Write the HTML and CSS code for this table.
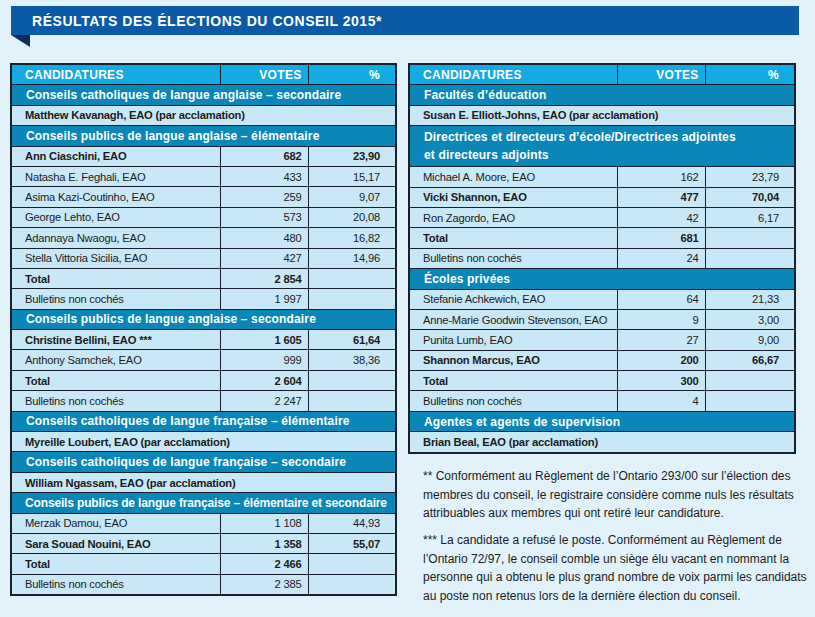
FILE: index.html
```html
<!DOCTYPE html>
<html lang="fr">
<head>
<meta charset="utf-8">
<title>Résultats des élections du conseil 2015</title>
<link rel="stylesheet" href="styles.css">
</head>
<body>
<div class="page">
  <header class="banner">
    <h1 class="banner-title">RÉSULTATS DES ÉLECTIONS DU CONSEIL 2015*</h1>
  </header>
  <div class="fold"></div>

  <div class="columns">
    <table class="results results-left">
      <colgroup><col class="c-name"><col class="c-votes"><col class="c-pct"></colgroup>
      <thead>
        <tr class="head"><th class="name">CANDIDATURES</th><th class="num">VOTES</th><th class="pct">%</th></tr>
      </thead>
      <tbody>
        <tr class="sec"><td colspan="3">Conseils catholiques de langue anglaise – secondaire</td></tr>
        <tr class="b"><td colspan="3" class="name">Matthew Kavanagh, EAO (par acclamation)</td></tr>
        <tr class="sec"><td colspan="3">Conseils publics de langue anglaise – élémentaire</td></tr>
        <tr class="b"><td class="name">Ann Ciaschini, EAO</td><td class="num">682</td><td class="pct">23,90</td></tr>
        <tr><td class="name">Natasha E. Feghali, EAO</td><td class="num">433</td><td class="pct">15,17</td></tr>
        <tr><td class="name">Asima Kazi-Coutinho, EAO</td><td class="num">259</td><td class="pct">9,07</td></tr>
        <tr><td class="name">George Lehto, EAO</td><td class="num">573</td><td class="pct">20,08</td></tr>
        <tr><td class="name">Adannaya Nwaogu, EAO</td><td class="num">480</td><td class="pct">16,82</td></tr>
        <tr><td class="name">Stella Vittoria Sicilia, EAO</td><td class="num">427</td><td class="pct">14,96</td></tr>
        <tr class="b"><td class="name">Total</td><td class="num">2 854</td><td class="pct"></td></tr>
        <tr><td class="name">Bulletins non cochés</td><td class="num">1 997</td><td class="pct"></td></tr>
        <tr class="sec"><td colspan="3">Conseils publics de langue anglaise – secondaire</td></tr>
        <tr class="b"><td class="name">Christine Bellini, EAO ***</td><td class="num">1 605</td><td class="pct">61,64</td></tr>
        <tr><td class="name">Anthony Samchek, EAO</td><td class="num">999</td><td class="pct">38,36</td></tr>
        <tr class="b"><td class="name">Total</td><td class="num">2 604</td><td class="pct"></td></tr>
        <tr><td class="name">Bulletins non cochés</td><td class="num">2 247</td><td class="pct"></td></tr>
        <tr class="sec"><td colspan="3">Conseils catholiques de langue française – élémentaire</td></tr>
        <tr class="b"><td colspan="3" class="name">Myreille Loubert, EAO (par acclamation)</td></tr>
        <tr class="sec"><td colspan="3">Conseils catholiques de langue française – secondaire</td></tr>
        <tr class="b"><td colspan="3" class="name">William Ngassam, EAO (par acclamation)</td></tr>
        <tr class="sec tight"><td colspan="3">Conseils publics de langue française – élémentaire et secondaire</td></tr>
        <tr><td class="name">Merzak Damou, EAO</td><td class="num">1 108</td><td class="pct">44,93</td></tr>
        <tr class="b"><td class="name">Sara Souad Nouini, EAO</td><td class="num">1 358</td><td class="pct">55,07</td></tr>
        <tr class="b"><td class="name">Total</td><td class="num">2 466</td><td class="pct"></td></tr>
        <tr><td class="name">Bulletins non cochés</td><td class="num">2 385</td><td class="pct"></td></tr>
      </tbody>
    </table>

    <div class="right">
      <table class="results results-right">
        <colgroup><col class="c-name"><col class="c-votes"><col class="c-pct"></colgroup>
        <thead>
          <tr class="head"><th class="name">CANDIDATURES</th><th class="num">VOTES</th><th class="pct">%</th></tr>
        </thead>
        <tbody>
          <tr class="sec"><td colspan="3">Facultés d’éducation</td></tr>
          <tr class="b"><td colspan="3" class="name">Susan E. Elliott-Johns, EAO (par acclamation)</td></tr>
          <tr class="sec double"><td colspan="3">Directrices et directeurs d’école/Directrices adjointes<br>et directeurs adjoints</td></tr>
          <tr><td class="name">Michael A. Moore, EAO</td><td class="num">162</td><td class="pct">23,79</td></tr>
          <tr class="b"><td class="name">Vicki Shannon, EAO</td><td class="num">477</td><td class="pct">70,04</td></tr>
          <tr><td class="name">Ron Zagordo, EAO</td><td class="num">42</td><td class="pct">6,17</td></tr>
          <tr class="b"><td class="name">Total</td><td class="num">681</td><td class="pct"></td></tr>
          <tr><td class="name">Bulletins non cochés</td><td class="num">24</td><td class="pct"></td></tr>
          <tr class="sec"><td colspan="3">Écoles privées</td></tr>
          <tr><td class="name">Stefanie Achkewich, EAO</td><td class="num">64</td><td class="pct">21,33</td></tr>
          <tr><td class="name">Anne-Marie Goodwin Stevenson, EAO</td><td class="num">9</td><td class="pct">3,00</td></tr>
          <tr><td class="name">Punita Lumb, EAO</td><td class="num">27</td><td class="pct">9,00</td></tr>
          <tr class="b"><td class="name">Shannon Marcus, EAO</td><td class="num">200</td><td class="pct">66,67</td></tr>
          <tr class="b"><td class="name">Total</td><td class="num">300</td><td class="pct"></td></tr>
          <tr><td class="name">Bulletins non cochés</td><td class="num">4</td><td class="pct"></td></tr>
          <tr class="sec"><td colspan="2">Agentes et agents de supervision</td><td class="split"></td></tr>
          <tr class="b"><td colspan="3" class="name">Brian Beal, EAO (par acclamation)</td></tr>
        </tbody>
      </table>

      <div class="notes">
        <p>** Conformément au Règlement de l’Ontario 293/00 sur l’élection des membres du conseil, le registraire considère comme nuls les résultats attribuables aux membres qui ont retiré leur candidature.</p>
        <p>*** La candidate a refusé le poste. Conformément au Règlement de l’Ontario 72/97, le conseil comble un siège élu vacant en nommant la personne qui a obtenu le plus grand nombre de voix parmi les candidats au poste non retenus lors de la dernière élection du conseil.</p>
      </div>
    </div>
  </div>
</div>
</body>
</html>
```

FILE: styles.css
```css
html, body {
  margin: 0;
  padding: 0;
  background: #e2f2fb;
}
body {
  font-family: "Liberation Sans", Arial, sans-serif;
  color: #1b1b1b;
}
.page {
  width: 815px;
  height: 617px;
  padding-top: 6px;
  box-sizing: border-box;
  overflow: hidden;
}
.banner {
  margin-left: 11px;
  width: 788px;
  height: 29px;
  background: #0b5aa7;
  display: flex;
  align-items: center;
}
.banner-title {
  margin: 0 0 0 21px;
  font-size: 14px;
  font-weight: bold;
  color: #ffffff;
  letter-spacing: 0.55px;
}
.fold {
  margin-left: 11px;
  width: 0;
  height: 0;
  border-top: 12px solid #0d2e63;
  border-left: 19px solid transparent;
}
.columns {
  display: flex;
  align-items: flex-start;
  margin-top: 16px;
  margin-left: 10px;
  gap: 11px;
}
.results {
  flex-shrink: 0;
  border-collapse: collapse;
  table-layout: fixed;
  border: 2px solid #17202c;
  font-size: 11.2px;
  letter-spacing: -0.2px;
}
.results-left { width: 387px; }
.results-right { width: 388px; }
.results-left .c-name { width: 209px; }
.results-right .c-name { width: 208px; }
.c-votes { width: 88px; }
.results td, .results th {
  height: 19.4px;
  padding: 0;
  border: 1px solid #17202c;
  background: #c8e8f8;
  white-space: nowrap;
  overflow: hidden;
}
.results .name { text-align: left; padding-left: 13px; }
.results .num { text-align: right; padding-right: 6px; }
.results .pct { text-align: right; padding-right: 15px; }
.results .b td { font-weight: bold; }
.head th {
  background: #14abe5;
  color: #ffffff;
  font-weight: bold;
  font-size: 12px;
  letter-spacing: 0.3px;
}
.sec td {
  background: #0a87b8;
  color: #ffffff;
  font-weight: bold;
  font-size: 12px;
  letter-spacing: 0.15px;
  padding-left: 14px;
  border-left-color: #0a87b8;
  border-right-color: #0a87b8;
}
.results .sec td:first-child { border-left-color: #17202c; }
.results .sec td:last-child { border-right-color: #17202c; }
.sec td.split {
  border-left-color: #17202c;
  padding-left: 0;
}
.sec.tight td { letter-spacing: -0.15px; padding-left: 13px; }
.sec.double td {
  height: 40px;
  line-height: 18px;
}
.right {
  flex-shrink: 0;
  display: flex;
  flex-direction: column;
}
.notes {
  width: 386px;
  margin-top: 13.5px;
  padding-left: 15px;
  font-size: 12px;
  line-height: 18.5px;
  color: #1b1b1b;
}
.notes p { margin: 0 0 8.5px 0; }
```
